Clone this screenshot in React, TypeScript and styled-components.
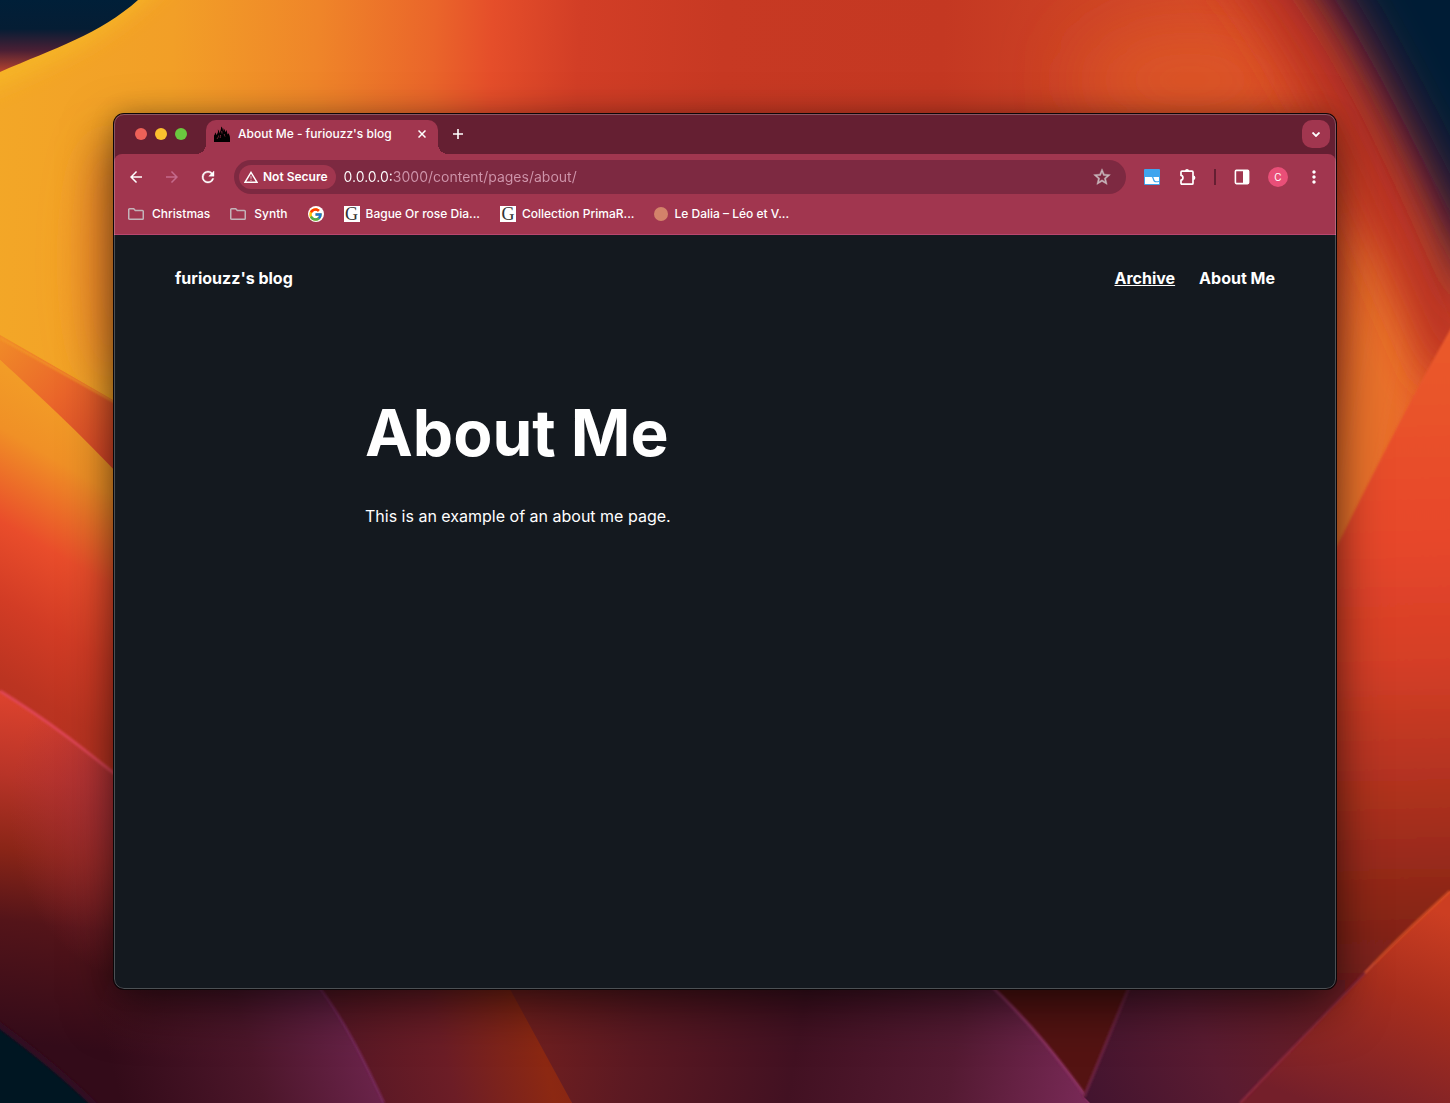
import React from "react";
import styled, { createGlobalStyle } from "styled-components";
import { MdArrowBack, MdArrowForward, MdMoreVert } from "react-icons/md";
import { FcGoogle } from "react-icons/fc";

const color = {
  frame: "#651f32",
  bar: "#a1364f",
  field: "#7d2941",
  edge: "#b9476f",
  page: "#14191f",
  text: "#ffffff",
  muted: "#cf95ab",
};

const GlobalStyle = createGlobalStyle`
  * { box-sizing: border-box; }
  body {
    margin: 0;
    background: #c23722;
    font-family: Inter, "Liberation Sans", sans-serif;
    color: ${color.text};
  }
  button { border: 0; padding: 0; background: none; color: inherit; font: inherit; cursor: pointer; }
  a { color: inherit; text-decoration: none; }
  svg { display: block; flex: none; }
`;

const Desktop = styled.div`
  position: relative;
  isolation: isolate;
  display: flex;
  min-height: 100vh;
  padding: 114px;
`;

const Backdrop = styled.svg`
  position: absolute;
  inset: 0;
  z-index: -1;
  width: 100%;
  height: 100%;
`;

const Window = styled.div`
  position: relative;
  flex: 1;
  min-width: 0;
  display: flex;
  flex-direction: column;
  border-radius: 10px;
  overflow: hidden;
  background: ${color.page};
`;

const Frame = styled.div`
  flex: 1;
  min-width: 0;
  display: flex;
  border-radius: 10px;
  box-shadow: 0 0 0 1px #0b0608, 0 18px 50px rgba(0, 0, 0, 0.55), 0 0 24px rgba(0, 0, 0, 0.2);
`;

const Rim = styled.div`
  position: absolute;
  inset: 0;
  border: 1px solid rgba(255, 255, 255, 0.24);
  border-radius: 10px;
  pointer-events: none;
`;

const TabStrip = styled.div`
  display: flex;
  align-items: center;
  height: 40px;
  padding: 0 6px 0 21px;
  background: ${color.frame};
`;

const Lights = styled.div`
  display: flex;
  gap: 8px;
  margin-right: 19px;
`;

const Light = styled.button<{ $tone: string }>`
  width: 12px;
  height: 12px;
  border-radius: 50%;
  background: ${(p) => p.$tone};
`;

const Tab = styled.div`
  position: relative;
  align-self: flex-end;
  display: flex;
  align-items: center;
  gap: 8px;
  width: 232px;
  height: 34px;
  padding: 0 8px 6px;
  border-radius: 10px 10px 0 0;
  background: ${color.bar};

  &::before,
  &::after {
    content: "";
    position: absolute;
    bottom: 0;
    width: 10px;
    height: 10px;
  }
  &::before {
    right: 100%;
    background: radial-gradient(circle at 0 0, transparent 10px, ${color.bar} 10px);
  }
  &::after {
    left: 100%;
    background: radial-gradient(circle at 100% 0, transparent 10px, ${color.bar} 10px);
  }
`;

const TabTitle = styled.span`
  flex: 1;
  font-size: 12px;
  line-height: 16px;
  font-weight: 500;
  white-space: nowrap;
`;

const IconButton = styled.button<{ $size?: number; $tone?: string }>`
  display: grid;
  place-items: center;
  flex: none;
  width: ${(p) => p.$size ?? 28}px;
  height: ${(p) => p.$size ?? 28}px;
  border-radius: 50%;
  color: ${(p) => p.$tone ?? color.text};
`;

const TabSearch = styled.button`
  display: grid;
  place-items: center;
  width: 28px;
  height: 28px;
  margin-left: auto;
  border-radius: 10px;
  background: ${color.bar};
`;

const Chrome = styled.div`
  background: ${color.frame};
`;

const Bars = styled.div`
  border-bottom: 1px solid ${color.edge};
  border-radius: 8px 8px 0 0;
  background: ${color.bar};
`;

const Toolbar = styled.div`
  display: flex;
  align-items: center;
  gap: 8px;
  padding: 6px 8px 0;
`;

const Omnibox = styled.div`
  display: flex;
  align-items: center;
  flex: 1;
  gap: 8px;
  height: 34px;
  margin: 0 4px;
  padding: 0 10px 0 5px;
  border-radius: 17px;
  background: ${color.field};
`;

const Security = styled.button`
  display: flex;
  align-items: center;
  gap: 5px;
  height: 24px;
  padding: 0 8px 0 5px;
  border-radius: 12px;
  background: ${color.bar};
  font-size: 12px;
  line-height: 16px;
  font-weight: 600;
  white-space: nowrap;
`;

const Address = styled.input`
  flex: 1;
  min-width: 0;
  border: 0;
  padding: 0;
  outline: 0;
  font: 400 14px/20px Inter, "Liberation Sans", sans-serif;
  color: ${color.muted};
  -webkit-text-fill-color: transparent;
  background: linear-gradient(90deg, ${color.text} 48px, ${color.muted} 48px);
  background-clip: text;
`;

const Divider = styled.span`
  width: 2px;
  height: 16px;
  margin: 0 4px;
  background: ${color.frame};
`;

const Avatar = styled.button`
  width: 20px;
  height: 20px;
  margin: 0 4px;
  border-radius: 50%;
  background: #e94f78;
  font-size: 10px;
  line-height: 20px;
`;

const Bookmarks = styled.nav`
  display: flex;
  align-items: center;
  gap: 20px;
  height: 40px;
  padding: 0 14px;
`;

const Bookmark = styled.a<{ $folder?: boolean }>`
  display: flex;
  align-items: center;
  gap: ${(p) => (p.$folder ? 8 : 6)}px;
  font-size: 12px;
  line-height: 16px;
  font-weight: 500;
  white-space: nowrap;
`;

const GoogleMark = styled.span`
  display: grid;
  place-items: center;
  width: 16px;
  height: 16px;
  border-radius: 50%;
  background: #fff;
`;

const SerifMark = styled.span`
  display: grid;
  place-items: center;
  width: 16px;
  height: 16px;
  background: #fff;
  color: #333;
  font: 400 18px/16px "Liberation Serif", serif;
`;

const Dot = styled.span`
  width: 14px;
  height: 14px;
  border-radius: 50%;
  background: #d3836a;
`;

const Page = styled.div`
  flex: 1;
  padding: 0 61px;
`;

const Header = styled.header`
  display: flex;
  justify-content: space-between;
  align-items: center;
  max-width: 1100px;
  margin: 0 auto;
  padding: 31px 0;
  font-size: 16px;
  line-height: 24px;
  font-weight: 700;
`;

const Links = styled.nav`
  display: flex;
  gap: 24px;
`;

const PageLink = styled.a<{ $underlined?: boolean }>`
  text-decoration: ${(p) => (p.$underlined ? "underline" : "none")};
`;

const Article = styled.main`
  max-width: 720px;
  margin: 0 auto;
  padding-top: 72px;
`;

const Heading = styled.h1`
  margin: 0 0 31px;
  font-size: 64px;
  line-height: 80px;
  font-weight: 700;
`;

const Paragraph = styled.p`
  margin: 0;
  font-size: 16px;
  line-height: 24px;
`;

const filterArea = {
  filterUnits: "userSpaceOnUse" as const,
  x: -100,
  y: -100,
  width: 1650,
  height: 1303,
};

function Wallpaper() {
  return (
    <Backdrop viewBox="0 0 1450 1103" preserveAspectRatio="xMidYMid slice" aria-hidden="true">
      <defs>
        <filter id="b1" {...filterArea}><feGaussianBlur stdDeviation="1" /></filter>
        <filter id="b10" {...filterArea}><feGaussianBlur stdDeviation="10" /></filter>
        <filter id="b20" {...filterArea}><feGaussianBlur stdDeviation="20" /></filter>
        <filter id="b40" {...filterArea}><feGaussianBlur stdDeviation="38" /></filter>
        <linearGradient id="sky" gradientUnits="userSpaceOnUse" x1="0" y1="0" x2="1450" y2="60">
          <stop offset="0" stopColor="#f3a727" />
          <stop offset=".12" stopColor="#f29f27" />
          <stop offset=".22" stopColor="#ef8529" />
          <stop offset=".3" stopColor="#ea652a" />
          <stop offset=".34" stopColor="#e54e2a" />
          <stop offset=".4" stopColor="#d23e26" />
          <stop offset=".5" stopColor="#c73923" />
          <stop offset=".65" stopColor="#c43822" />
          <stop offset=".78" stopColor="#cf4526" />
          <stop offset="1" stopColor="#e4512a" />
        </linearGradient>
        <linearGradient id="night" x1="0" y1="0" x2="0" y2="1">
          <stop offset="0" stopColor="#001f38" />
          <stop offset=".4" stopColor="#051d34" />
          <stop offset=".7" stopColor="#4a1f34" />
          <stop offset="1" stopColor="#b8442e" />
        </linearGradient>
        <linearGradient id="leftWedge" gradientUnits="userSpaceOnUse" x1="0" y1="340" x2="113" y2="460">
          <stop offset="0" stopColor="#f08a28" />
          <stop offset=".5" stopColor="#ea652a" />
          <stop offset="1" stopColor="#d64527" />
        </linearGradient>
        <linearGradient id="leftBand" gradientUnits="userSpaceOnUse" x1="60" y1="400" x2="-110" y2="690">
          <stop offset="0" stopColor="#f29c27" />
          <stop offset=".16" stopColor="#f09026" />
          <stop offset=".4" stopColor="#e94d2b" />
          <stop offset=".6" stopColor="#d23c25" />
          <stop offset=".8" stopColor="#bb3421" />
          <stop offset="1" stopColor="#b23020" />
        </linearGradient>
        <linearGradient id="leftLow" gradientUnits="userSpaceOnUse" x1="40" y1="690" x2="0" y2="1040">
          <stop offset="0" stopColor="#e0442e" />
          <stop offset=".25" stopColor="#b83428" />
          <stop offset=".46" stopColor="#8a2517" />
          <stop offset=".66" stopColor="#541419" />
          <stop offset="1" stopColor="#330b19" />
        </linearGradient>
        <radialGradient id="leftGlow" gradientUnits="userSpaceOnUse" cx="0" cy="0" r="1" gradientTransform="translate(140 810) scale(130 170)">
          <stop offset="0" stopColor="#a8303f" stopOpacity=".75" />
          <stop offset=".5" stopColor="#a8303f" stopOpacity=".4" />
          <stop offset="1" stopColor="#a8303f" stopOpacity="0" />
        </radialGradient>
        <linearGradient id="leftSlope" gradientUnits="userSpaceOnUse" x1="110" y1="1060" x2="376" y2="990">
          <stop offset="0" stopColor="#4c162a" stopOpacity="0" />
          <stop offset=".5" stopColor="#4c162a" />
          <stop offset="1" stopColor="#702650" />
        </linearGradient>
        <linearGradient id="ember" gradientUnits="userSpaceOnUse" x1="330" y1="1040" x2="560" y2="980">
          <stop offset="0" stopColor="#561725" />
          <stop offset=".45" stopColor="#6c1d26" />
          <stop offset=".85" stopColor="#8c2812" />
          <stop offset="1" stopColor="#852514" />
        </linearGradient>
        <linearGradient id="valley" gradientUnits="userSpaceOnUse" x1="530" y1="960" x2="1100" y2="1060">
          <stop offset="0" stopColor="#73201f" />
          <stop offset=".2" stopColor="#5c1922" />
          <stop offset=".48" stopColor="#421122" />
          <stop offset=".75" stopColor="#541a32" />
          <stop offset="1" stopColor="#7a2a58" />
        </linearGradient>
        <linearGradient id="plum" gradientUnits="userSpaceOnUse" x1="1090" y1="1103" x2="1330" y2="1000">
          <stop offset="0" stopColor="#43142f" />
          <stop offset=".5" stopColor="#5a1b31" />
          <stop offset="1" stopColor="#6a1d24" />
        </linearGradient>
        <linearGradient id="corner" gradientUnits="userSpaceOnUse" x1="1410" y1="900" x2="1330" y2="1110">
          <stop offset="0" stopColor="#cc3e22" />
          <stop offset=".4" stopColor="#a82e1d" />
          <stop offset="1" stopColor="#741f2a" />
        </linearGradient>
        <linearGradient id="rightWall" gradientUnits="userSpaceOnUse" x1="1400" y1="340" x2="1420" y2="1000">
          <stop offset="0" stopColor="#ea5a2b" />
          <stop offset=".3" stopColor="#e7472b" />
          <stop offset=".48" stopColor="#d63f27" />
          <stop offset=".66" stopColor="#b43320" />
          <stop offset=".84" stopColor="#8e2718" />
          <stop offset="1" stopColor="#701d1c" />
        </linearGradient>
      </defs>

      <rect width="1450" height="1103" fill="url(#sky)" />
      <ellipse cx="1190" cy="80" rx="110" ry="50" fill="#dd5727" filter="url(#b40)" />
      <ellipse cx="110" cy="260" rx="26" ry="120" fill="#ef842a" filter="url(#b20)" />

      <path d="M-30 84C60 48 110 24 170-40" fill="none" stroke="#f7bb27" strokeWidth="26" opacity=".7" filter="url(#b10)" />
      <path d="M0 0H138C100 34 55 48 0 72Z" fill="url(#night)" />

      <path d="M1400 230C1390 330 1370 420 1336 580" fill="none" stroke="#ea7229" strokeWidth="90" filter="url(#b20)" />
      <path d="M1235-60C1325 40 1375 180 1462 370" fill="none" stroke="#be3520" strokeWidth="64" filter="url(#b20)" />
      <path d="M1245-90C1340 20 1392 130 1470 310L1600-90Z" fill="#4b1a31" filter="url(#b20)" />
      <path d="M1295-90C1372 10 1405 90 1485 240L1600-90Z" fill="#001f36" filter="url(#b20)" />

      <path d="M1450 330C1410 400 1370 480 1330 560V1103H1460V310Z" fill="url(#rightWall)" filter="url(#b1)" />

      <path d="M0 335L120 404V480L0 360Z" fill="url(#leftWedge)" />
      <path d="M0 338L120 405" stroke="#f39a27" strokeWidth="2" filter="url(#b1)" />
      <path d="M0 360C40 396 80 434 120 476V800L0 700Z" fill="url(#leftBand)" />

      <path d="M300 960H540L572 1103H340Z" fill="url(#ember)" />
      <path d="M0 691C50 722 80 746 130 786L314 980C345 1020 365 1062 384 1103H0Z" fill="url(#leftLow)" />
      <path d="M0 691C50 722 80 746 130 786V1000H0Z" fill="url(#leftGlow)" />
      <path d="M110 980H314C345 1020 365 1062 384 1103H60Z" fill="url(#leftSlope)" />
      <path d="M0 691C50 722 80 746 130 786" fill="none" stroke="#df4656" strokeWidth="3" filter="url(#b1)" />
      <path d="M314 980C345 1020 365 1062 384 1103" fill="none" stroke="#7d2c60" strokeWidth="2" filter="url(#b1)" />
      <path d="M-30 1005C20 1042 60 1070 108 1120H-30Z" fill="#001523" filter="url(#b1)" />
      <path d="M-10 1018C20 1040 60 1070 100 1110" fill="none" stroke="#330a20" strokeWidth="6" filter="url(#b1)" />

      <path d="M505 980L572 1103H1092C1060 1060 1030 1022 985 980Z" fill="url(#valley)" />
      <path d="M985 980C1030 1022 1060 1060 1092 1103L1140 980Z" fill="#541312" />
      <path d="M985 980C1030 1022 1060 1060 1092 1105" fill="none" stroke="#88305f" strokeWidth="3" filter="url(#b1)" />
      <path d="M1132 980L1084 1097L1090 1103H1250L1345 1000V980Z" fill="url(#plum)" />
      <path d="M1132 980L1084 1097" stroke="#6b2340" strokeWidth="3" filter="url(#b1)" />
      <path d="M1240 1103C1310 1030 1380 955 1450 891V1103Z" fill="url(#corner)" />
      <path d="M1240 1103C1310 1030 1345 993 1375 963" fill="none" stroke="#8e2c40" strokeWidth="2" filter="url(#b1)" />
      <path d="M1365 973C1390 946 1420 918 1450 891" fill="none" stroke="#de5428" strokeWidth="2" filter="url(#b1)" />
    </Backdrop>
  );
}

const FlameIcon = () => (
  <svg width="16" height="16" viewBox="0 0 16 16" aria-hidden="true">
    <path d="M0 16V9.500C1 8.500 1 7.500 1 6.500C2 7 2 8 2.200 9C3.500 7.500 4.600 6.200 3.800 3.500C5 4.500 5.400 6 5.200 7.500C6.200 5.500 7.200 3.500 7.200 .500C8.600 2 9 3.200 9 5C9.800 4.200 9.600 3 9.400 2.200C11 3.500 11 5 11.600 6.200C12.200 5.500 12 4.500 12 3.800C13.400 5.600 13 7 13.600 8.400C14.200 8 14.200 7.400 14.200 7C15.400 8.500 16 10.500 16 12V16Z" fill="#000" />
    <path d="M3 13C3.800 11.500 4.600 11 4.600 9.500M6.600 9C6.200 10 6.600 11 6.200 12M8 7.500C7.700 6.500 8 6 7.700 5M11 10.500C10.400 9.800 10.600 9 10.200 8" fill="none" stroke="#8c2f45" strokeWidth=".8" />
  </svg>
);

const CloseIcon = () => (
  <svg width="8" height="8" viewBox="0 0 8 8" aria-hidden="true">
    <path d="M.5.5l7 7M7.500.5l-7 7" stroke="currentColor" strokeWidth="1.500" />
  </svg>
);

const PlusIcon = () => (
  <svg width="10" height="10" viewBox="0 0 10 10" aria-hidden="true">
    <path d="M5 0v10M0 5h10" stroke="currentColor" strokeWidth="1.600" />
  </svg>
);

const ChevronIcon = () => (
  <svg width="8" height="5" viewBox="0 0 8 5" aria-hidden="true">
    <path d="M.5.5L4 4L7.500.5" fill="none" stroke="currentColor" strokeWidth="1.800" />
  </svg>
);

const ReloadIcon = () => (
  <svg width="18" height="18" viewBox="0 0 24 24" aria-hidden="true">
    <path d="M17.650 6.350A7.960 7.960 0 0 0 12 4a8 8 0 1 0 7.730 10h-2.080A6 6 0 1 1 12 6c1.660 0 3.140.69 4.220 1.780L13 11h7V4z" fill="currentColor" stroke="currentColor" strokeWidth=".5" />
  </svg>
);

const StarIcon = () => (
  <svg width="20" height="20" viewBox="0 0 24 24" aria-hidden="true">
    <path d="M22 9.240l-7.190-.620L12 2 9.190 8.630 2 9.240l5.460 4.730L5.820 21 12 17.270 18.180 21l-1.630-7.030zM12 15.400l-3.760 2.270 1-4.280-3.320-2.880 4.380-.380L12 6.100l1.710 4.040 4.380.380-3.320 2.880 1 4.280z" fill="currentColor" stroke="currentColor" strokeWidth=".5" />
  </svg>
);

const WarningIcon = () => (
  <svg width="14" height="12" viewBox="0 0 14 12" aria-hidden="true">
    <path d="M7 1.300L13 11.300H1Z" fill="none" stroke="#fff" strokeWidth="1.400" />
    <path d="M7 4.800v3M7 8.800v1.200" stroke="#d9a5b3" strokeWidth="1.200" />
  </svg>
);

const FolderIcon = () => (
  <svg width="16" height="12" viewBox="0 0 16 12" aria-hidden="true">
    <path d="M.75 1.600c0-.5.350-.850.850-.850h4.100L7.300 2.500h7.100c.5 0 .85.350.85.850v7.050c0 .5-.35.850-.85.850H1.600c-.5 0-.85-.35-.85-.85Z" fill="none" stroke="#c3b3b9" strokeWidth="1.500" />
  </svg>
);

const WaveIcon = () => (
  <svg width="16" height="16" viewBox="0 0 16 16" aria-hidden="true">
    <rect width="16" height="16" rx="1" fill="#3fa5ee" />
    <path d="M1 8h6.500C8.800 8 8.600 12.600 11 13.200C12.300 13.400 13.800 13.300 15 13V15H1Z" fill="#fff" />
    <path d="M9.200 8H15v3.900C13.700 12.300 12.400 12.400 11.400 12C10 11.400 10.200 9 9.200 8Z" fill="#fff" />
  </svg>
);

const PuzzleIcon = () => (
  <svg width="18" height="18" viewBox="0 0 18 18" aria-hidden="true">
    <path d="M2 4.200c0-.6.400-1 1-1h10c.6 0 1 .4 1 1v11c0 .6-.4 1-1 1H3c-.6 0-1-.4-1-1v-3c2.600-.2 2.600-4.600 0-4.800Z" fill="none" stroke="#fff" strokeWidth="1.700" strokeLinejoin="round" />
    <path d="M6 3a2 2 0 0 1 4 0ZM14.200 7.500a2.200 2.200 0 0 1 0 4.400Z" fill="#fff" />
  </svg>
);

const PanelIcon = () => (
  <svg width="16" height="16" viewBox="0 0 16 16" aria-hidden="true">
    <rect x="1.400" y="1.400" width="13.200" height="13.200" rx="1" fill="none" stroke="#fff" strokeWidth="1.600" />
    <rect x="9" y="1.400" width="5.600" height="13.200" fill="#fff" />
  </svg>
);

export default function App() {
  return (
    <>
      <GlobalStyle />
      <Desktop>
        <Wallpaper />
        <Frame>
          <Window>
            <Chrome>
              <TabStrip>
                <Lights>
                  <Light $tone="#ed6158" aria-label="Close window" />
                  <Light $tone="#fcc02e" aria-label="Minimise window" />
                  <Light $tone="#6ac73f" aria-label="Zoom window" />
                </Lights>
                <Tab>
                  <FlameIcon />
                  <TabTitle>About Me - furiouzz's blog</TabTitle>
                  <IconButton $size={16} aria-label="Close tab"><CloseIcon /></IconButton>
                </Tab>
                <IconButton $size={40} aria-label="New tab"><PlusIcon /></IconButton>
                <TabSearch aria-label="Search tabs"><ChevronIcon /></TabSearch>
              </TabStrip>
              <Bars>
                <Toolbar>
                  <IconButton aria-label="Back"><MdArrowBack size={18} /></IconButton>
                  <IconButton $tone="#c56a8c" aria-label="Forward"><MdArrowForward size={18} /></IconButton>
                  <IconButton aria-label="Reload"><ReloadIcon /></IconButton>
                  <Omnibox>
                    <Security>
                      <WarningIcon />
                      Not Secure
                    </Security>
                    <Address aria-label="Address" defaultValue="0.0.0.0:3000/content/pages/about/" />
                    <IconButton $tone="#c6b3b9" aria-label="Bookmark this page"><StarIcon /></IconButton>
                  </Omnibox>
                  <IconButton aria-label="Waves extension"><WaveIcon /></IconButton>
                  <IconButton aria-label="Extensions"><PuzzleIcon /></IconButton>
                  <Divider />
                  <IconButton aria-label="Side panel"><PanelIcon /></IconButton>
                  <Avatar aria-label="Profile C">C</Avatar>
                  <IconButton aria-label="Menu"><MdMoreVert size={20} /></IconButton>
                </Toolbar>
                <Bookmarks aria-label="Bookmarks">
                  <Bookmark href="#" $folder><FolderIcon />Christmas</Bookmark>
                  <Bookmark href="#" $folder><FolderIcon />Synth</Bookmark>
                  <Bookmark href="#" aria-label="Google"><GoogleMark><FcGoogle size={15} /></GoogleMark></Bookmark>
                  <Bookmark href="#"><SerifMark>G</SerifMark>Bague Or rose Dia...</Bookmark>
                  <Bookmark href="#"><SerifMark>G</SerifMark>Collection PrimaR...</Bookmark>
                  <Bookmark href="#"><Dot />Le Dalia – Léo et V...</Bookmark>
                </Bookmarks>
              </Bars>
            </Chrome>
            <Page>
              <Header>
                <PageLink href="#">furiouzz's blog</PageLink>
                <Links>
                  <PageLink href="#" $underlined>Archive</PageLink>
                  <PageLink href="#">About Me</PageLink>
                </Links>
              </Header>
              <Article>
                <Heading>About Me</Heading>
                <Paragraph>This is an example of an about me page.</Paragraph>
              </Article>
            </Page>
            <Rim />
          </Window>
        </Frame>
      </Desktop>
    </>
  );
}
